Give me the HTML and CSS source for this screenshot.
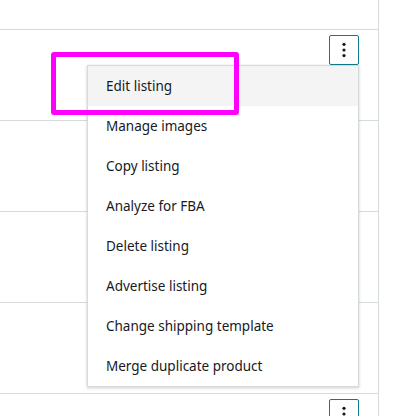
FILE: index.html
```html
<!DOCTYPE html>
<html>
<head>
    <title>Listings</title>
    <link rel="stylesheet" href="styles.css">
</head>
<body>
    <div class="table">
        <div class="row row-top"></div>

        <div class="row">
            <div class="actions">
                <button class="kebab" aria-label="More actions">
                    <svg width="6" height="18" viewBox="0 0 6 18"><circle cx="3" cy="3.3" r="1.6"/><circle cx="3" cy="9" r="1.6"/><circle cx="3" cy="14.6" r="1.6"/></svg>
                </button>
                <ul class="menu">
                    <li class="active">Edit listing</li>
                    <li>Manage images</li>
                    <li>Copy listing</li>
                    <li>Analyze for FBA</li>
                    <li>Delete listing</li>
                    <li>Advertise listing</li>
                    <li>Change shipping template</li>
                    <li>Merge duplicate product</li>
                </ul>
            </div>
        </div>

        <div class="row">
            <div class="actions">
                <button class="kebab"><svg width="6" height="18" viewBox="0 0 6 18"><circle cx="3" cy="3.3" r="1.6"/><circle cx="3" cy="9" r="1.6"/><circle cx="3" cy="14.6" r="1.6"/></svg></button>
            </div>
        </div>
        <div class="row">
            <div class="actions">
                <button class="kebab"><svg width="6" height="18" viewBox="0 0 6 18"><circle cx="3" cy="3.3" r="1.6"/><circle cx="3" cy="9" r="1.6"/><circle cx="3" cy="14.6" r="1.6"/></svg></button>
            </div>
        </div>
        <div class="row">
            <div class="actions">
                <button class="kebab"><svg width="6" height="18" viewBox="0 0 6 18"><circle cx="3" cy="3.3" r="1.6"/><circle cx="3" cy="9" r="1.6"/><circle cx="3" cy="14.6" r="1.6"/></svg></button>
            </div>
        </div>
        <div class="row">
            <div class="actions">
                <button class="kebab"><svg width="6" height="18" viewBox="0 0 6 18"><circle cx="3" cy="3.3" r="1.6"/><circle cx="3" cy="9" r="1.6"/><circle cx="3" cy="14.6" r="1.6"/></svg></button>
            </div>
        </div>
    </div>

    <!-- annotation box drawn over the screenshot -->
    <div class="highlight"></div>
</body>
</html>
```

FILE: styles.css
```css
html, body {
    height: 416px;
    overflow: hidden;
}

body {
    margin: 0;
    font-family: "Noto Sans", Arial, sans-serif;
    color: #16191f;
    background: #fff;
    position: relative;
}

.table {
    width: 378px;
    height: 416px;
    overflow: hidden;
    border-right: 1px solid #d5dbdb;
}

.row {
    height: 90px;
    border-bottom: 1px solid #d5dbdb;
    display: flex;
    justify-content: flex-end;
    padding-right: 19px;
}

.row-top {
    height: 29px;
}

.actions {
    position: relative;
    padding-top: 5px;
}

.kebab {
    width: 30px;
    height: 30px;
    padding: 0;
    margin: 0;
    border: 1px solid #0f7c8c;
    border-radius: 2px;
    background: #fff;
    display: flex;
    align-items: center;
    justify-content: center;
    cursor: pointer;
}

.kebab svg {
    fill: #16191f;
    margin-top: -1px;
}

.menu {
    position: absolute;
    top: 35px;
    right: 0;
    width: 270px;
    margin: 0;
    padding: 0;
    list-style: none;
    background: #fff;
    border: 1px solid #d5dbdb;
    box-shadow: 0 1px 3px rgba(0, 0, 0, 0.2);
    z-index: 10;
}

.menu li {
    height: 40px;
    line-height: 40px;
    padding-left: 18px;
    font-size: 13.5px;
    white-space: nowrap;
}

.menu li.active {
    background: #f4f4f4;
}

.highlight {
    position: absolute;
    left: 51px;
    top: 52px;
    width: 178px;
    height: 53px;
    border: 5px solid #ff00ff;
    border-radius: 3px;
    z-index: 20;
}
```
